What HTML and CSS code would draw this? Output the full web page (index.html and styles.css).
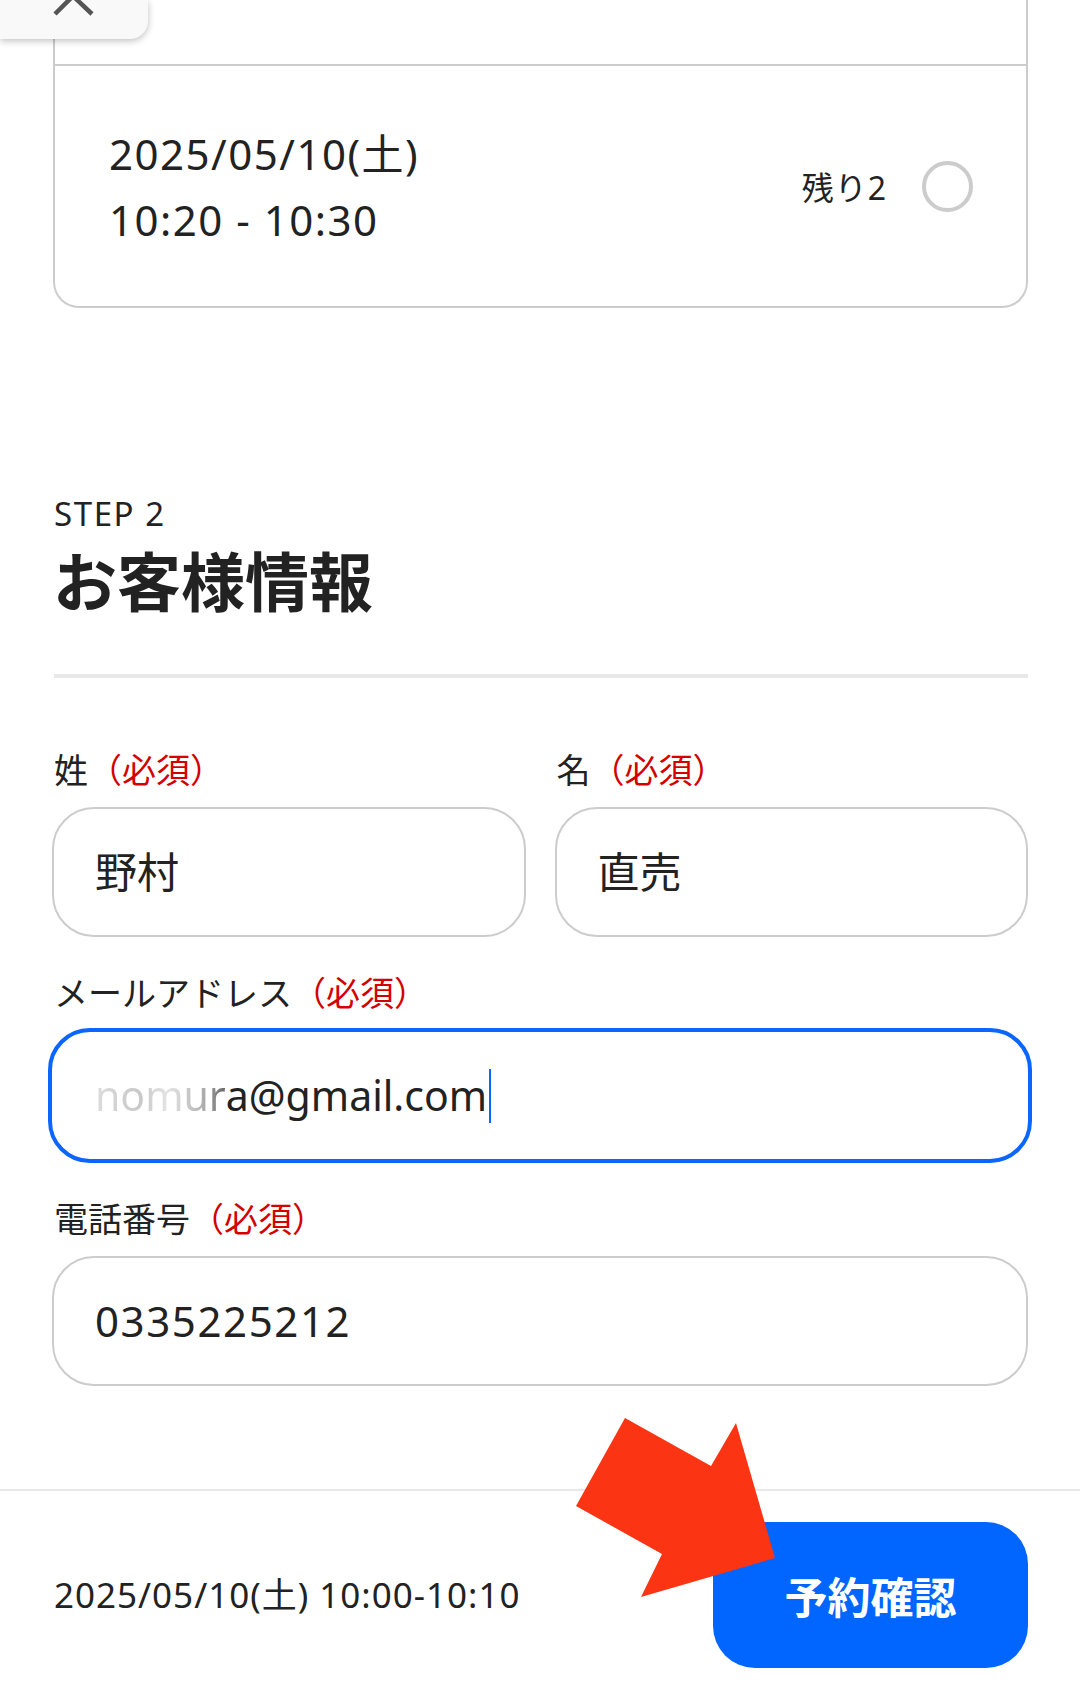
FILE: index.html
```html
<!DOCTYPE html>
<html lang="ja">
<head>
<meta charset="utf-8">
<title>お客様情報</title>
<link rel="stylesheet" href="styles.css">
</head>
<body>
<div class="page">
  <div class="close-tab">
    <svg class="close-icon" width="148" height="39" viewBox="0 0 148 39"><polyline points="55,14 73,-4 92,14" fill="none" stroke="#555" stroke-width="4.5"/></svg>
  </div>

  <main class="content">
    <div class="slot-card">
      <div class="slot-prev"></div>
      <div class="slot">
        <div class="slot-time">
          <div>2025/05/10(土)</div>
          <div>10:20 - 10:30</div>
        </div>
        <div class="slot-side">
          <span class="remain">残り2</span>
          <span class="radio"></span>
        </div>
      </div>
    </div>

    <section class="step">
      <p class="step-no">STEP 2</p>
      <h2 class="step-title">お客様情報</h2>
      <div class="rule"></div>

      <div class="name-row">
        <div class="group">
          <div class="label">姓<span class="req">（必須）</span></div>
          <div class="field">野村</div>
        </div>
        <div class="group">
          <div class="label">名<span class="req">（必須）</span></div>
          <div class="field">直売</div>
        </div>
      </div>

      <div class="group spaced">
        <div class="label">メールアドレス<span class="req">（必須）</span></div>
        <div class="field focused"><span class="blurred">nomur</span><span class="email">a@gmail.com</span><span class="caret"></span></div>
      </div>

      <div class="group spaced">
        <div class="label">電話番号<span class="req">（必須）</span></div>
        <div class="field digits">0335225212</div>
      </div>
    </section>
  </main>

  <footer class="bar">
    <div class="bar-summary">2025/05/10(土) 10:00-10:10</div>
    <button class="confirm" type="button">予約確認</button>
  </footer>

  <svg class="arrow" width="1080" height="1688" viewBox="0 0 1080 1688">
    <polygon points="625,1418 711,1466 736,1423 775,1558 641,1597 662,1554 576,1506" fill="#fb3413"/>
  </svg>
</div>
</body>
</html>
```

FILE: styles.css
```css
* { box-sizing: border-box; }

html, body {
  margin: 0;
  padding: 0;
  background: #fff;
}

body {
  font-family: "Noto Sans", "Noto Sans CJK JP", sans-serif;
  color: #222;
}

.page {
  position: relative;
  width: 1080px;
  height: 1688px;
  overflow: hidden;
}

.close-tab {
  position: absolute;
  left: 0;
  top: 0;
  width: 148px;
  height: 39px;
  background: #f9f9f9;
  border-radius: 0 0 18px 0;
  box-shadow: 0 2px 7px rgba(0, 0, 0, 0.25);
  z-index: 2;
}

.close-icon { display: block; }

.content {
  padding: 0 52px;
}

/* slot card */
.slot-card {
  border: 2px solid #ccc;
  border-top: none;
  border-radius: 0 0 26px 26px;
  margin: 0 0 0 1px;
}

.slot-prev {
  height: 66px;
  border-bottom: 2px solid #ccc;
}

.slot {
  height: 240px;
  display: flex;
  align-items: center;
  justify-content: space-between;
  padding: 0 53px 0 54px;
}

.slot-time {
  font-size: 42px;
  line-height: 66px;
  letter-spacing: 1.5px;
  padding-top: 2px;
}

.slot-side {
  display: flex;
  align-items: center;
  gap: 35px;
}

.remain {
  font-size: 32px;
  letter-spacing: 1px;
}

.radio {
  width: 51px;
  height: 51px;
  border: 4px solid #ccc;
  border-radius: 50%;
}

/* step */
.step-no {
  margin: 186px 0 0 2px;
  font-size: 33px;
  line-height: 40px;
  letter-spacing: 1.6px;
}

.step-title {
  margin: 8px 0 0 1px;
  font-size: 64px;
  line-height: 80px;
  font-weight: 700;
}

.rule {
  margin: 52px 0 0 2px;
  height: 4px;
  background: #e8e8e8;
}

.name-row {
  margin-top: 70px;
  display: grid;
  grid-template-columns: 1fr 1fr;
  gap: 29px;
}

.group.spaced { margin-top: 34px; }

.label {
  font-size: 34px;
  line-height: 44px;
  padding-left: 2px;
}

.req { color: #d40000; }

.field {
  margin-top: 15px;
  height: 130px;
  border: 2px solid #ccc;
  border-radius: 42px;
  padding: 0 0 0 41px;
  display: flex;
  align-items: center;
  font-size: 42px;
  line-height: 1;
  color: #222;
}

.field.focused {
  margin: 13px -4px 0;
  height: 135px;
  border: 4px solid #0a66ff;
  padding-left: 43px;
  font-size: 41px;
}

.blurred {
  background: linear-gradient(90deg, #dcdcdc 0%, #c8c8c8 35%, #e4e4e4 55%, #b8b8b8 80%, #666 100%);
  -webkit-background-clip: text;
  background-clip: text;
  color: transparent;
}

.caret {
  display: inline-block;
  width: 2px;
  height: 54px;
  margin-left: 2px;
  background: #0a66ff;
}

.field.digits { letter-spacing: 1.6px; }

/* bottom bar */
.bar {
  margin-top: 103px;
  border-top: 2px solid #e8e8e8;
  padding: 31px 52px 20px 54px;
  display: flex;
  align-items: center;
  justify-content: space-between;
}

.bar-summary {
  font-size: 35px;
  line-height: 44px;
  letter-spacing: 1px;
}

.confirm {
  width: 315px;
  height: 146px;
  border: none;
  border-radius: 42px;
  background: #0066ff;
  color: #fff;
  font-family: "Noto Sans CJK JP", sans-serif;
  font-size: 43px;
  font-weight: 700;
  padding: 0;
}

.arrow {
  position: absolute;
  left: 0;
  top: 0;
  pointer-events: none;
  z-index: 3;
}
```
